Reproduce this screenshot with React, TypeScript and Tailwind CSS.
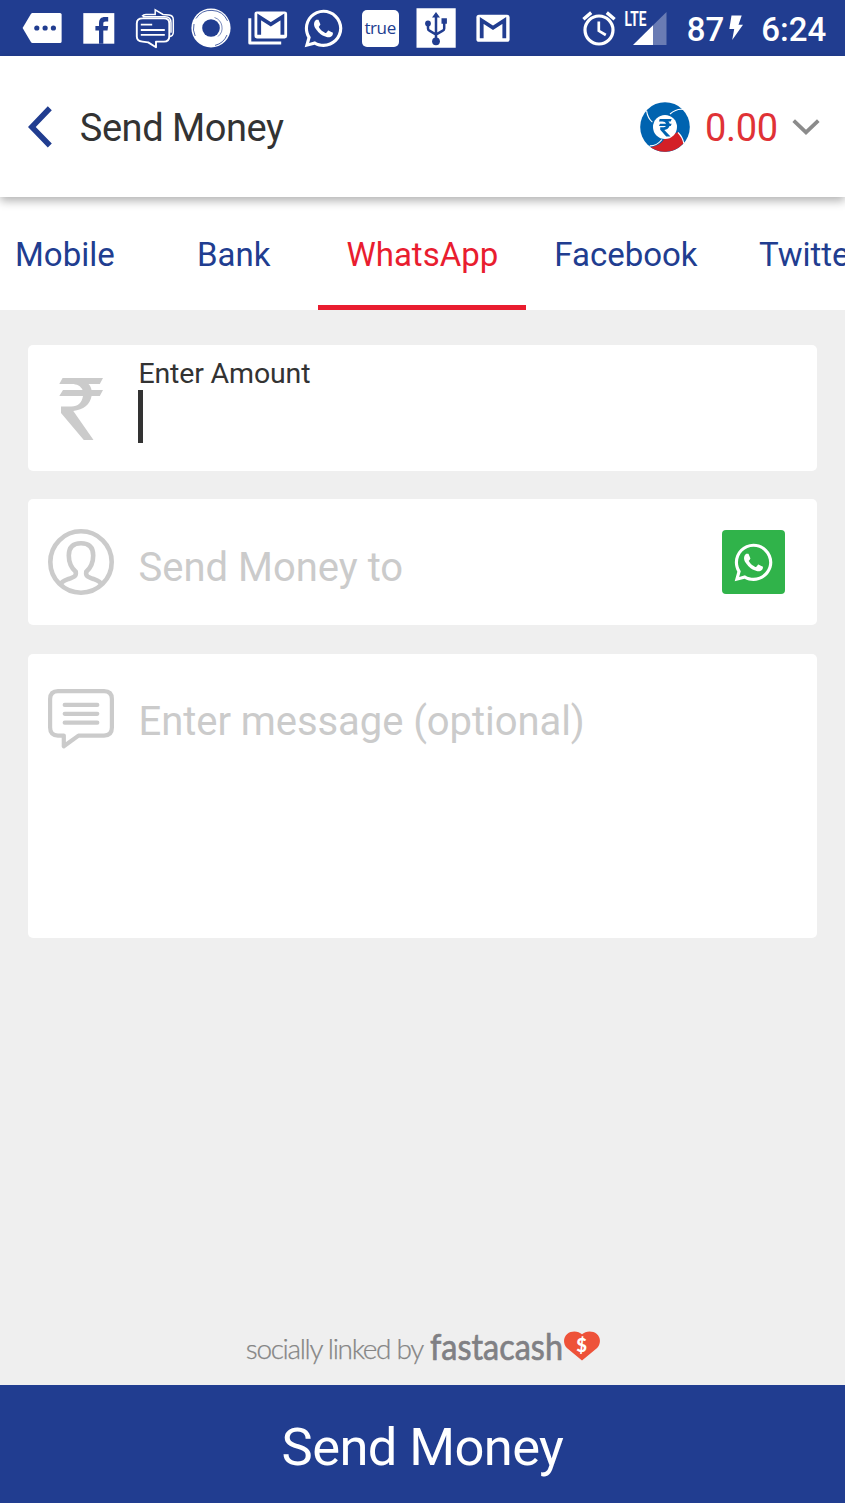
import type { ReactNode } from "react";
import { FaWhatsapp } from "react-icons/fa";

const BLUE = "#213d90";

const StatusIcon = ({ children }: { children: ReactNode }) => (
  <div className="flex h-12 w-[56.3px] shrink-0 items-center justify-center text-white">
    <svg viewBox="0 0 48 48" className="h-12 w-12" fill="none">
      {children}
    </svg>
  </div>
);

const StatusBar = () => (
  <div className="flex h-14 shrink-0 items-center bg-[#213d90] pl-[14.2px] text-white">
    {/* Notifications */}
    <StatusIcon>
      <path d="M14.5 9H42q1.6 0 1.6 1.6v26.8q0 1.6-1.6 1.6H14.5q-1 0-1.6-1L4.6 24l8.3-14q.6-1 1.6-1Z" fill="#fff" />
      <circle cx="18.8" cy="24" r="2.6" fill={BLUE} />
      <circle cx="27.1" cy="24" r="2.6" fill={BLUE} />
      <circle cx="35.4" cy="24" r="2.6" fill={BLUE} />
    </StatusIcon>
    <StatusIcon>
      <path d="M8.3 9.1h31v30.6h-31Z" fill="#fff" />
      <path d="M24 39.7V26.6h-3.6v-4.5H24v-2.6c0-4.4 2-6.4 6-6.4h3.2v4.3h-2.4c-2 0-2.5.7-2.5 2.4v2.3h4.9l-.7 4.5h-4.2v13.1Z" fill={BLUE} />
    </StatusIcon>
    <StatusIcon>
      <path
        d="M11 12.2q1.5-1.8 4-1.8h9.2V5.8l7.8 4.7 6 .6q4.3.5 4.3 4.5v12.6q0 4.2-4.5 4.4M12 12.8h22q6 0 6 6v10"
        stroke="#fff"
        strokeWidth="1.5"
      />
      <path
        d="M11.5 14.4h21.4q5.4 0 5.4 5v13q0 5-5.4 5.2H25v5.6l-7.8-4.8-5.7-.8q-5.7-.6-5.7-5.2v-13q0-5 5.7-5Z"
        stroke="#fff"
        strokeWidth="1.9"
        strokeLinejoin="round"
      />
      <path d="M9.8 20.6h11.4M9.8 26h24M9.8 30.8h24" stroke="#fff" strokeWidth="1.8" />
    </StatusIcon>
    <StatusIcon>
      <circle cx="24" cy="24" r="19.6" fill="#fff" />
      <circle cx="24" cy="24" r="8.8" fill={BLUE} />
      <path d="M9 14.5A17.7 17.7 0 0 1 25 6.4a17.7 17.7 0 0 1 15.5 10.5M40 31a17.7 17.7 0 0 1-12 10.4M7 20a17.5 17.5 0 0 0 1.2 12" stroke={BLUE} strokeWidth=".8" />
      <path d="M27.5 13.5a11 11 0 0 1 3.5 19" stroke={BLUE} strokeWidth=".6" />
    </StatusIcon>
    <StatusIcon>
      <path d="M5.8 14.3V39h31.4" stroke="#fff" strokeWidth="3" strokeLinejoin="round" />
      <rect x="10.5" y="7.4" width="32.6" height="27" rx="2.4" fill="#fff" />
      <path d="M15.2 30.8V12.9L26.8 20.3l11.6-7.4v17.9" stroke={BLUE} strokeWidth="3.8" />
    </StatusIcon>
    <div className="flex h-12 w-[56.3px] shrink-0 items-center justify-center">
      <FaWhatsapp className="h-[43px] w-[43px]" />
    </div>
    <div className="flex h-12 w-[56.3px] shrink-0 items-center justify-center">
      <div className="flex h-[37px] w-[37px] items-center justify-center rounded-[5px] bg-white pb-0.5 font-['Open_Sans',sans-serif] text-[17px] leading-none font-medium tracking-[-0.4px] text-[#213d90]">
        true
      </div>
    </div>
    <StatusIcon>
      <path d="M4.5 4.3h39.2v39.4H4.5Z" fill="#fff" />
      <path d="M24 12v25M16 20v4.5q0 1.5 1.4 2.2L24 30.5l6.8-3.8q1.4-.7 1.4-2.2V18" stroke={BLUE} strokeWidth="2.5" />
      <path d="m24 8 4 5.6h-8ZM29.5 14.3h5.4v5.4h-5.4Z" fill={BLUE} />
      <circle cx="16" cy="19.5" r="2.9" fill={BLUE} />
      <circle cx="24" cy="37.3" r="3.9" fill={BLUE} />
    </StatusIcon>
    <StatusIcon>
      <rect x="7.4" y="10.8" width="33.2" height="27" rx="2.6" fill="#fff" />
      <path d="M12.7 34.3V16.4L24 23.8l11.3-7.4v17.9" stroke={BLUE} strokeWidth="3.8" />
    </StatusIcon>

    {/* System state */}
    <svg viewBox="0 0 34 36" className="ml-[61.5px] h-9 w-[34px] shrink-0" fill="none" stroke="#fff">
      <circle cx="17" cy="20" r="14" strokeWidth="3.2" />
      <path d="M16.8 11.5v9.3l7 4.2" strokeWidth="2.7" />
      <path d="m1.4 9.2 7.8-6.6M32.6 9.2l-7.8-6.6" strokeWidth="3.4" />
    </svg>
    <svg viewBox="0 0 42 36" className="ml-[8.9px] h-9 w-[42px] shrink-0 overflow-visible">
      <path d="M41.5 2v33H28V15.3Z" fill="#fff" opacity=".33" />
      <path d="M28 15.3V35H8Z" fill="#fff" />
      <text x="-.6" y="16" fill="#fff" fontFamily="Roboto, sans-serif" fontSize="19.5" fontWeight="700" textLength="22" lengthAdjust="spacingAndGlyphs">
        LTE
      </text>
    </svg>
    <span className="mt-0.5 ml-[19.5px] font-['Roboto',sans-serif] text-[33px] leading-none font-medium">87</span>
    <svg viewBox="0 0 14 26" className="ml-[4.5px] h-[26px] w-3.5 shrink-0 fill-white">
      <path d="M2.5.5h10.2L9.5 9.8H14L3.2 25l2-11H.3Z" />
    </svg>
    <span className="mt-0.5 ml-[18.6px] font-['Roboto',sans-serif] text-[33px] leading-none font-medium">6:24</span>
  </div>
);

const BalanceLogo = () => (
  <svg viewBox="0 0 50 50" className="h-[50px] w-[50px] shrink-0" fill="none">
    <circle cx="25" cy="25" r="24.8" fill="#0063b0" />
    <path d="M10.5 45.3C17 43.5 21.5 42 24 37.2L38 30c3.2 3.3 4.8 7.5 5.3 11.5A25 25 0 0 1 10.5 45.3Z" fill="#d32027" />
    <path
      d="M6.6 8.8C7.2 13 9 17.2 12.4 20.2M30 12c3.5-3 8-5.5 13.2-4.6M38 30.5c3.5 3.5 5.3 7.5 5.8 11M22 37.5c-3 3.6-7.5 6.5-12.2 6.4"
      stroke="#fff"
      strokeWidth="1.1"
    />
    <circle cx="25" cy="25" r="12" fill="#fff" />
    <path d="M19.7 17h12l-1 2.4h-2.4c.8.7 1.2 1.4 1.4 2.3h2l-1 2.4h-1.2c-.7 2.3-2.6 3.7-5.2 4l6.2 6.4h-4.3l-6-6.7v-2.5h2.2c1.9 0 3-.2 3.6-1.2h-7l1-2.4h6c-.5-1.5-1.7-2.3-3.7-2.3h-3.3Z" fill="#0063b0" />
  </svg>
);

const Header = () => (
  <div className="z-10 flex h-[141px] shrink-0 items-center bg-white pl-7 shadow-[0_4px_9px_rgba(0,0,0,0.3)]">
    <svg viewBox="0 0 24 42" className="h-[42px] w-6 shrink-0" fill="none" stroke="#213d90" strokeWidth="5.6">
      <path d="M21.8 2.2 3.8 21l18 18.5" />
    </svg>
    <h1 className="mt-[3px] ml-[27.8px] font-['Roboto',sans-serif] text-[38px] leading-none font-normal tracking-[-0.45px] text-[#333]">
      Send Money
    </h1>
    <div className="mr-[25px] ml-auto flex items-center">
      <BalanceLogo />
      <span className="mt-[3px] ml-[14.8px] font-['Roboto',sans-serif] text-[38px] leading-none tracking-[-0.3px] text-[#e03236]">0.00</span>
      <svg viewBox="0 0 28 16" className="ml-[14.2px] h-4 w-7 shrink-0" fill="none" stroke="#8b8b8b" strokeWidth="3.8">
        <path d="m1.7 1.7 12.3 11.6L26.3 1.7" />
      </svg>
    </div>
  </div>
);

const tabs = [
  { label: "Mobile", className: "w-[149px] pl-[15px] text-[#213d90]" },
  { label: "Bank", className: "w-[169.4px] justify-center text-[#213d90]" },
  { label: "WhatsApp", className: "w-[208px] justify-center border-[#e91d2f] text-[#e91d2f]" },
  { label: "Facebook", className: "w-[199px] justify-center text-[#213d90]" },
  { label: "Twitter", className: "w-[169px] pl-[33.5px] text-[#213d90]" },
];

const Tabs = () => (
  <div className="flex h-[113px] shrink-0 overflow-hidden bg-white">
    {tabs.map((tab) => (
      <button
        key={tab.label}
        className={`flex shrink-0 items-center border-b-[5px] pt-[7px] font-['Roboto',sans-serif] text-[33px] leading-none ${tab.label === "WhatsApp" ? "" : "border-transparent"} ${tab.className}`}
      >
        {tab.label}
      </button>
    ))}
  </div>
);

const AmountField = () => (
  <div className="flex h-[126px] rounded-[5px] bg-white">
    <svg viewBox="0 0 44 62" className="mt-[32.5px] ml-[31px] h-[62px] w-11 shrink-0 fill-[#cbcbcb]">
      <path d="M3.6 0h40.4l-3.2 6H29.5c1.7 1.7 2.6 3.8 3 6H44l-3.2 6h-8.2c-1.6 8.5-8 13.8-18.3 15L34.5 62h-9.7L2 35v-6.5h10.5c6.5 0 10.4-4 11.5-10.5H.3L4 12h19.6c-1.8-4-5.5-6-11-6H.3Z" />
    </svg>
    <div className="ml-[35.4px] pt-[13px]">
      <label className="block font-['Roboto',sans-serif] text-[28.5px] leading-[32px] tracking-[-0.15px] text-[#333]">Enter Amount</label>
      <div className="h-[53px] w-[5px] bg-[#333]" />
    </div>
  </div>
);

const RecipientField = () => (
  <div className="flex h-[126px] items-center rounded-[5px] bg-white">
    <svg viewBox="0 0 66 66" className="ml-5 h-[66px] w-[66px] shrink-0" fill="none" stroke="#cbcbcb" strokeWidth="4.6">
      <circle cx="33" cy="33" r="30.7" />
      <path d="M12.5 55.5c1-3 4-4 8-5.5 6.3-2.2 8-3.2 7.2-7.3C23 38.5 20.8 33 20.8 26.5c0-8.3 4-12.2 12.2-12.2s12.2 3.9 12.2 12.2c0 6.5-2.2 12-6.9 16.2-.8 4.1.9 5.1 7.2 7.3 4 1.5 7 2.5 8 5.5" />
    </svg>
    <span className="mt-[11px] ml-[24.5px] font-['Roboto',sans-serif] text-[40px] leading-[48px] text-[#cbcbcb]">Send Money to</span>
    <button className="mr-8 ml-auto flex h-16 w-[63.3px] items-center justify-center rounded-[4px] bg-[#30b34a] text-white">
      <FaWhatsapp className="h-[43px] w-[43px]" />
    </button>
  </div>
);

const MessageField = () => (
  <div className="flex h-[284px] rounded-[5px] bg-white">
    <svg viewBox="0 0 66 60" className="mt-[35px] ml-5 h-[60px] w-[66px] shrink-0" fill="none" stroke="#cbcbcb" strokeWidth="4.2" strokeLinejoin="round">
      <path d="M10 2.1h46q7.9 0 7.9 8v28.5q0 8-7.9 8H30.5L15.8 57.2V46.6H10q-7.9 0-7.9-8V10.1q0-8 7.9-8Z" />
      <path d="M16.7 15.9h32.6M16.7 24.8h32.6M16.7 33.7h32.6" strokeLinecap="round" />
    </svg>
    <span className="mt-11 ml-[24.5px] font-['Roboto',sans-serif] text-[40px] leading-[48px] tracking-[-0.06px] text-[#cbcbcb]">
      Enter message (optional)
    </span>
  </div>
);

// Partner lockup: light tagline, condensed wordmark and the heart badge
const Attribution = () => (
  <svg viewBox="0 0 356 42" className="mt-auto mb-[18px] ml-[245px] h-[42px] w-[356px] shrink-0 overflow-visible" fontFamily="Lato, sans-serif">
    <text x=".8" y="33.5" fill="#858585" stroke="#858585" strokeWidth=".25" fontSize="28" fontWeight="300" textLength="178.5" lengthAdjust="spacing">
      socially linked by
    </text>
    <text x="185" y="35.3" fill="#808084" stroke="#808084" strokeWidth=".7" fontSize="37.5" fontWeight="400" textLength="133" lengthAdjust="spacingAndGlyphs">
      fastacash
    </text>
    <path d="M337 9.3c3.4-3.5 10.5-4 14.8-.4 4.3 3.8 4 10 .3 14.1L337 35.6 321.9 23c-3.7-4.1-4-10.3.3-14.1 4.3-3.6 11.4-3.1 14.8.4Z" fill="#ee5239" />
    <text x="336.5" y="27" textAnchor="middle" fill="#fff" fontSize="18.5" fontWeight="900">
      $
    </text>
  </svg>
);

const App = () => (
  <div className="flex h-[1503px] w-[845px] flex-col overflow-hidden bg-[#efefef] whitespace-nowrap">
    <StatusBar />
    <Header />
    <Tabs />
    <main className="flex flex-1 flex-col">
      <div className="flex flex-col gap-[28.2px] px-7 pt-[35.2px]">
        <AmountField />
        <RecipientField />
        <MessageField />
      </div>
      <Attribution />
    </main>
    <button className="h-[118px] shrink-0 bg-[#213d90] pt-1.5 font-['Roboto',sans-serif] text-[52.5px] leading-none tracking-[-0.6px] text-white">
      Send Money
    </button>
  </div>
);

export default App;
